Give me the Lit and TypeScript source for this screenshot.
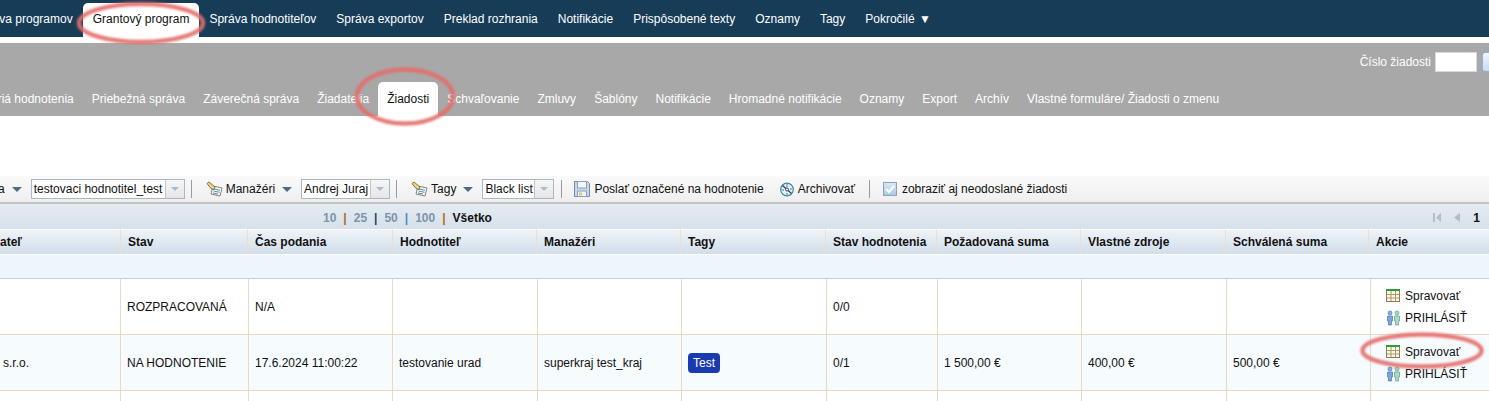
import { LitElement, html, css, svg } from "lit";
import { customElement } from "lit/decorators.js";

const NAV = ["Správa programov","Grantový program","Správa hodnotiteľov","Správa exportov","Preklad rozhrania","Notifikácie","Prispôsobené texty","Oznamy","Tagy"];
const SUB = ["Kritériá hodnotenia","Priebežná správa","Záverečná správa","Žiadatelia","Žiadosti","Schvaľovanie","Zmluvy","Šablóny","Notifikácie","Hromadné notifikácie","Oznamy","Export","Archív","Vlastné formuláre/ Žiadosti o zmenu"];
const HEAD = ["ateľ","Stav","Čas podania","Hodnotiteľ","Manažéri","Tagy","Stav hodnotenia","Požadovaná suma","Vlastné zdroje","Schválená suma","Akcie"];
const ROW1 = ["","ROZPRACOVANÁ","N/A","","","","0/0","","",""];
const ROW2 = ["s.r.o.","NA HODNOTENIE","17.6.2024 11:00:22","testovanie urad","superkraj test_kraj","@tag","0/1","1 500,00 €","400,00 €","500,00 €"];

const noteIcon = svg`<svg width="18" height="16" viewBox="0 0 18 16"><path d="M7 5l9 2-2 8-9-2z" fill="#fbfaf2" stroke="#7f8778"/><path d="M8 8l6 1.300M7.500 10l6 1.300M7 12l5 1" stroke="#5f86b8"/><path d="M1 2.500l2-1.500 6 5-1 2.500-3-1z" fill="#ecd690" stroke="#80703c"/></svg>`;
const gridIcon = svg`<svg width="15" height="14" viewBox="0 0 15 14"><rect x=".5" y=".5" width="13" height="12" fill="#fdf8e6" stroke="#8a7a50"/><rect x="0" y="0" width="14" height="2" fill="#2f9a3c"/><path d="M.5 5.500h13M.5 9h13M5 2v10M9.500 2v10" stroke="#a89a6a"/></svg>`;
const peopleIcon = svg`<svg width="15" height="16" viewBox="0 0 15 16"><circle cx="4" cy="3" r="2" fill="#8ab0dc" stroke="#3d6aa8" stroke-width=".6"/><path d="M1.500 6h5v5h-1v4h-3v-4h-1z" fill="#7ea6d8" stroke="#3d6aa8" stroke-width=".6"/><circle cx="11" cy="3" r="2" fill="#a8d8c0" stroke="#4f8f78" stroke-width=".6"/><path d="M8.500 6h5v5h-1v4h-3v-4h-1z" fill="#a8dcc4" stroke="#4f8f78" stroke-width=".6"/></svg>`;
const saveIcon = svg`<svg width="16" height="16" viewBox="0 0 16 16"><path d="M.5.500h13l2 2v13H.5z" fill="#c9d8e8" stroke="#6f8cab"/><rect x="3.500" y=".5" width="9" height="6.500" fill="#f4f7fa" stroke="#8ba2bc"/><rect x="3.500" y="10" width="9" height="5.500" fill="#eef2f6" stroke="#8ba2bc"/><rect x="5" y="11.500" width="3" height="3" fill="#e6c27a"/></svg>`;
const archIcon = svg`<svg width="16" height="15" viewBox="0 0 16 15"><circle cx="8" cy="7.500" r="6.300" fill="#e6f0f6" stroke="#3f8aa0" stroke-width="1.200"/><path d="M3.500 3.500l9 8" stroke="#2c4468" stroke-width="1.400"/><path d="M8 2v3M13 7h-2M8 13v-2M3 8h2" stroke="#5a7694"/><circle cx="8" cy="7.500" r="1.500" fill="#fff" stroke="#2c4468"/></svg>`;
const checkIcon = svg`<svg width="14" height="14" viewBox="0 0 14 14"><defs><linearGradient id="cg" x1="0" y1="0" x2="0" y2="1"><stop offset="0" stop-color="#dbe9f6"/><stop offset="1" stop-color="#a9c8e6"/></linearGradient></defs><rect x=".5" y=".5" width="13" height="13" fill="url(#cg)" stroke="#8ea2b6"/><path d="M3 7l3 3 5-6" fill="none" stroke="#fff" stroke-width="2"/></svg>`;
const firstIcon = svg`<svg width="8" height="9" viewBox="0 0 8 9"><path d="M0 0h2v9H0zM8 0v9L3 4.500z" fill="#b4bcc4"/></svg>`;
const prevIcon = svg`<svg width="6" height="9" viewBox="0 0 6 9"><path d="M6 0v9L0 4.500z" fill="#b4bcc4"/></svg>`;

@customElement("app-root")
export class AppRoot extends LitElement {
  static styles = css`
    :host { display: block; position: relative; width: 1489px; height: 401px; overflow: hidden; background: #fff; font: 12px "Liberation Sans", Arial, sans-serif; color: #111; }
    .nav { height: 37px; background: #163c58; display: flex; align-items: flex-end; overflow: hidden; }
    .nav-row { display: flex; margin-left: -36px; flex: none; }
    .nav-item { color: #fff; padding: 0 10px; height: 34px; line-height: 33px; white-space: nowrap; flex: none; }
    .nav-item.on { background: #fff; color: #111; border-radius: 5px 5px 0 0; }
    .caret { font-size: 12px; margin-left: 1px; }
    .grey { margin-top: 6px; height: 73px; background: #a8a8a8; display: flex; flex-direction: column; overflow: hidden; }
    .search { height: 38px; margin-bottom: 1px; flex: none; display: flex; justify-content: flex-end; align-items: center; gap: 4px; color: #fff; margin-right: -23px; }
    .search input { box-sizing: border-box; width: 42px; height: 20px; border: 1px solid #d8d8d8; background: #fff; padding: 0; }
    .search .btn { width: 30px; height: 20px; margin-left: 1px; box-sizing: border-box; border: 1px solid #8fb0d4; border-radius: 3px; background: linear-gradient(#f0f6fc, #c8dcf0); }
    .sub { display: flex; height: 34px; margin-left: -36px; }
    .sub-item { color: #fff; padding: 0 9px; line-height: 34px; white-space: nowrap; flex: none; }
    .sub-item.on { background: #fff; color: #111; border-radius: 5px 5px 0 0; }
    .toolbar { box-sizing: border-box; margin-top: 60px; height: 28px; border-bottom: 2px solid #c4c4c4; background: linear-gradient(#fafafa, #efefef); display: flex; align-items: center; overflow: hidden; }
    .tb-group { display: flex; align-items: center; flex: none; white-space: nowrap; }
    .arrow { width: 0; height: 0; border: 5px solid transparent; border-top: 5px solid #4d6c8c; border-bottom: 0; margin-left: 7px; flex: none; }
    .combo { box-sizing: border-box; height: 20px; border: 1px solid #a9b8c8; background: #fff; display: flex; margin-left: 9px; flex: none; white-space: nowrap; overflow: hidden; }
    .combo span { padding: 0 2px; line-height: 18px; color: #111; flex: 1; min-width: 0; }
    .combo i { width: 18px; flex: none; border-left: 1px solid #bcc8d4; background: linear-gradient(#f6f6f6, #e6e6e6); display: flex; align-items: center; justify-content: center; }
    .combo i::after { content: ""; border: 4px solid transparent; border-top: 4px solid #a8bcd0; border-bottom: 0; }
    .sep { width: 1px; height: 18px; background: #9a9a9a; margin: 0 14px 0 6px; flex: none; }
    .sep.s3 { margin: 0 12px 0 7px; }
    .sep.s4 { margin: 0 13px 0 14px; }
    .ico { display: flex; margin-right: 2px; }
    .ico.save { margin-right: 4px; }
    .ico.arch { margin-right: 3px; }
    .ico.chk { margin-right: 5px; }
    .after-save { margin-left: 15px; }
    .first-tool { margin-left: -2px; }
    .pager { box-sizing: border-box; height: 25px; padding-top: 2px; background: linear-gradient(#e4ebf2, #d6e1eb); display: flex; align-items: center; font-weight: bold; }
    .sizes { margin-left: 323px; color: #7e93a9; display: flex; gap: 7px; }
    .sizes b { color: #b06a20; } .sizes b.d { color: #2a4058; } .sizes b.l { color: #4e88c0; }
    .sizes em { font-style: normal; color: #111; }
    .pages { margin-left: auto; margin-right: 9px; display: flex; align-items: center; gap: 13px; }
    .heads { display: grid; grid-template-columns: 120px 127px 145px 144px 144px 145px 111px 144px 145px 143px 121px; }
    .grid { display: grid; grid-template-columns: 120px 128px 144px 145px 144px 145px 111px 144px 145px 144px 119px; }
    .h { box-sizing: border-box; height: 25px; line-height: 24px; padding-left: 7px; font-weight: bold; border-left: 1px solid #ecdfcb; background: linear-gradient(#eef3f8, #d2deea); white-space: nowrap; border-top: 1px solid #fff; }
    .h.first { border-left: 0; padding-left: 0; }
    .filter { box-sizing: border-box; height: 24px; margin-top: 1px; background: #edf5fd; border-bottom: 1px solid #b8d4ec; }
    .c { box-sizing: border-box; height: 56px; border-left: 1px solid #e8d9c6; border-bottom: 1px solid #e8d9c6; padding-left: 6px; display: flex; align-items: center; white-space: nowrap; }
    .c.first { border-left: 0; padding-left: 3px; }
    .alt { background: #f6fbfe; }
    .blank { height: 11px; border-left: 1px solid #e8d9c6; box-sizing: border-box; }
    .blank.first { border-left: 0; }
    .tag { background: #1a3bb0; color: #fff; border-radius: 4px; padding: 0 5px; line-height: 20px; }
    .act { display: flex; flex-direction: column; gap: 6px; margin-left: 9px; }
    .act div { display: flex; align-items: center; height: 16px; gap: 4px; }
    .act svg { flex: none; }
    .marks { position: absolute; inset: 0; pointer-events: none; }
  `;

  private sel(label: string, w: number) {
    return html`<div class="combo" style="width:${w}px"><span>${label}</span><i></i></div>`;
  }

  private row(cells: string[], alt: boolean) {
    const cls = alt ? "alt" : "";
    return html`${cells.map((t, i) => html`<div class="c ${cls} ${i === 0 ? "first" : ""}">${t === "@tag" ? html`<span class="tag">Test</span>` : t}</div>`)}
      <div class="c ${cls}"><div class="act">
        <div>${gridIcon}<span>Spravovať</span></div>
        <div>${peopleIcon}<span>PRIHLÁSIŤ</span></div>
      </div></div>`;
  }

  render() {
    return html`
      <div class="nav"><div class="nav-row">
        ${NAV.map((n, i) => html`<div class="nav-item ${i === 1 ? "on" : ""}">${n}</div>`)}
        <div class="nav-item">Pokročilé <span class="caret">▼</span></div>
      </div></div>
      <div class="grey">
        <div class="search"><span>Číslo žiadosti</span><input /><div class="btn"></div></div>
        <div class="sub">${SUB.map((n, i) => html`<div class="sub-item ${i === 4 ? "on" : ""}">${n}</div>`)}</div>
      </div>
      <div class="toolbar">
        <div class="tb-group first-tool"><span>a</span><span class="arrow"></span></div>
        ${this.sel("testovaci hodnotitel_test", 154)}
        <span class="sep"></span>
        <div class="tb-group"><span class="ico">${noteIcon}</span>Manažéri<span class="arrow"></span></div>
        ${this.sel("Andrej Juraj", 89)}
        <span class="sep"></span>
        <div class="tb-group"><span class="ico">${noteIcon}</span>Tagy<span class="arrow"></span></div>
        ${this.sel("Black list", 72)}
        <span class="sep s3"></span>
        <div class="tb-group"><span class="ico save">${saveIcon}</span>Poslať označené na hodnotenie</div>
        <div class="tb-group after-save"><span class="ico arch">${archIcon}</span>Archivovať</div>
        <span class="sep s4"></span>
        <div class="tb-group"><span class="ico chk">${checkIcon}</span>zobraziť aj neodoslané žiadosti</div>
      </div>
      <div class="pager">
        <div class="sizes"><span>10</span><b>|</b><span>25</span><b class="d">|</b><span>50</span><b class="l">|</b><span>100</span><b>|</b><em>Všetko</em></div>
        <div class="pages">${firstIcon}${prevIcon}<span>1</span></div>
      </div>
      <div class="heads">
        ${HEAD.map((h, i) => html`<div class="h ${i === 0 ? "first" : ""}">${h}</div>`)}
      </div>
      <div class="filter"></div>
      <div class="grid">
        ${this.row(ROW1, false)}
        ${this.row(ROW2, true)}
        ${HEAD.map((_, i) => html`<div class="blank ${i === 0 ? "first" : ""}"></div>`)}
      </div>
      <svg class="marks" width="1489" height="401" viewBox="0 0 1489 401">
        <defs><filter id="b" x="-10%" y="-30%" width="120%" height="160%"><feGaussianBlur stdDeviation=".8"/></filter></defs>
        <g fill="none" stroke="#e36f6c" stroke-opacity=".9" stroke-width="4.500" filter="url(#b)">
          <ellipse cx="141" cy="23" rx="62" ry="19"/>
          <ellipse cx="405" cy="96.500" rx="48" ry="27"/>
          <ellipse cx="1422" cy="350.500" rx="59.500" ry="16"/>
        </g>
      </svg>
    `;
  }
}
